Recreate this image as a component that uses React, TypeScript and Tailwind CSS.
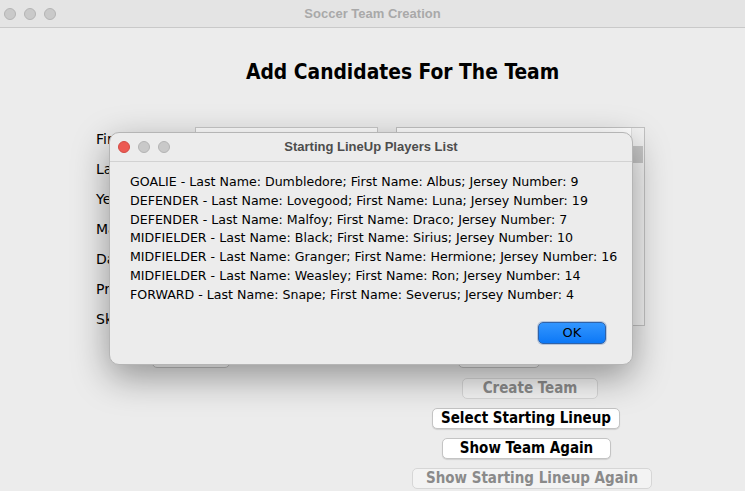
const labels = ["First Name", "Last Name", "Year of Birth", "Main Position", "Date of Join", "Preferred Foot", "Skill Level"];

const lineup = [
  "GOALIE - Last Name: Dumbledore; First Name: Albus; Jersey Number: 9",
  "DEFENDER - Last Name: Lovegood; First Name: Luna; Jersey Number: 19",
  "DEFENDER - Last Name: Malfoy; First Name: Draco; Jersey Number: 7",
  "MIDFIELDER - Last Name: Black; First Name: Sirius; Jersey Number: 10",
  "MIDFIELDER - Last Name: Granger; First Name: Hermione; Jersey Number: 16",
  "MIDFIELDER - Last Name: Weasley; First Name: Ron; Jersey Number: 14",
  "FORWARD - Last Name: Snape; First Name: Severus; Jersey Number: 4",
];

// bouton du formulaire principal
function WinButton({ label, disabled, className }: { label: string; disabled?: boolean; className: string }) {
  return (
    <div
      className={
        (disabled
          ? "h-[21px] flex items-center justify-center rounded-[5px] border border-[#d6d6d6] bg-[#f3f3f3] text-[#8a8a8a] text-[15px] font-bold leading-none "
          : "h-[21px] flex items-center justify-center rounded-[5px] border border-[#c4c4c4] bg-white text-black text-[15px] font-bold leading-none shadow-[0_1px_1px_rgba(0,0,0,0.12)] ") + className
      }
      style={{ fontFamily: '"DejaVu Sans Condensed", "DejaVu Sans", sans-serif' }}
    >
      {label}
    </div>
  );
}

function Lights({ red }: { red?: boolean }) {
  return (
    <div className="flex gap-[8px]">
      <div className={red ? "w-[12px] h-[12px] rounded-full bg-[#ec5a53] border border-[#d24b44]" : "w-[12px] h-[12px] rounded-full bg-[#c9c9c9] border border-[#b4b4b4]"} />
      <div className="w-[12px] h-[12px] rounded-full bg-[#c9c9c9] border border-[#b4b4b4]" />
      <div className="w-[12px] h-[12px] rounded-full bg-[#c9c9c9] border border-[#b4b4b4]" />
    </div>
  );
}

export default function App() {
  return (
    <div className="relative w-[745px] h-[491px] overflow-hidden bg-[#ececec]">
      {/* barre de titre */}
      <div className="relative h-[28px] bg-[#e4e4e4] border-b border-[#c9c9c9] flex items-center pl-[4px]">
        <Lights />
        <div
          className="absolute inset-0 flex items-center justify-center text-[13px] font-bold text-[#a9a9a9]"
          style={{ fontFamily: '"Liberation Sans", Arial, sans-serif' }}
        >
          Soccer Team Creation
        </div>
      </div>

      <div style={{ fontFamily: '"DejaVu Sans", sans-serif' }}>
        <h1
          className="mt-[31px] ml-[246px] h-[28px] flex items-center text-[20.8px] font-bold text-black"
          style={{ fontFamily: '"DejaVu Sans Condensed", "DejaVu Sans", sans-serif' }}
        >
          Add Candidates For The Team
        </h1>

        {/* formulaire */}
        <div className="mt-[40px] ml-[96px] flex items-start">
          <div className="flex flex-col">
            {labels.map((l) => (
              <div key={l} className="h-[30px] flex items-start">
                <div className="w-[99px] h-[24px] flex items-center whitespace-nowrap text-[14px] text-black">{l}</div>
                <div className="w-[183px] h-[24px] bg-white border border-[#c9c9c9]" />
              </div>
            ))}
          </div>
          <div className="ml-[18px] w-[249px] h-[199px] bg-white border border-[#c2c2c2] flex justify-end">
            <div className="w-[13px] h-full bg-[#f2f2f2] border-l border-[#e0e0e0] pt-[18px] px-[1px]">
              <div className="h-[17px] bg-[#c6c6c6]" />
            </div>
          </div>
        </div>

        <div className="mt-[9px] ml-[152px] flex gap-[228px]">
          <div className="w-[78px] h-[22px] rounded-[5px] bg-white border border-[#c4c4c4]" />
          <div className="w-[82px] h-[22px] rounded-[5px] bg-white border border-[#c4c4c4]" />
        </div>

        <div className="mt-[10px] ml-[398px] flex flex-col items-start gap-[9px]">
          <WinButton label="Create Team" disabled className="ml-[64px] w-[136px]" />
          <WinButton label="Select Starting Lineup" className="ml-[34px] w-[188px]" />
          <WinButton label="Show Team Again" className="ml-[44px] w-[169px]" />
          <WinButton label="Show Starting Lineup Again" disabled className="ml-[14px] w-[240px]" />
        </div>
      </div>

      {/* boîte de dialogue */}
      <div className="absolute left-[109px] top-[132px] w-[524px] h-[233px] rounded-[10px] bg-[#ececec] border border-[#b5b5b5] shadow-[0_12px_36px_rgba(0,0,0,0.38)] flex flex-col">
        <div className="relative h-[29px] border-b border-[#d2d2d2] flex items-center pl-[8px]">
          <Lights red />
          <div
            className="absolute inset-0 flex items-center justify-center text-[13px] font-bold text-[#4d4d4d]"
            style={{ fontFamily: '"Liberation Sans", Arial, sans-serif' }}
          >
            Starting LineUp Players List
          </div>
        </div>
        <div className="pt-[11px] pl-[20px] flex flex-col text-[12.6px] leading-[18.8px] text-black" style={{ fontFamily: '"DejaVu Sans", sans-serif' }}>
          {lineup.map((line) => (
            <div key={line} className="whitespace-nowrap">{line}</div>
          ))}
        </div>
        <div className="mt-auto mb-[20px] mr-[26px] flex justify-end">
          <div
            className="w-[68px] h-[22px] rounded-[5px] border border-[#2f62a8] bg-gradient-to-b from-[#3196ff] to-[#0a78f6] flex items-center justify-center text-[13px] text-black shadow-[0_0_0_1px_rgba(60,110,180,0.3)]"
            style={{ fontFamily: '"DejaVu Sans", sans-serif' }}
          >
            OK
          </div>
        </div>
      </div>
    </div>
  );
}
